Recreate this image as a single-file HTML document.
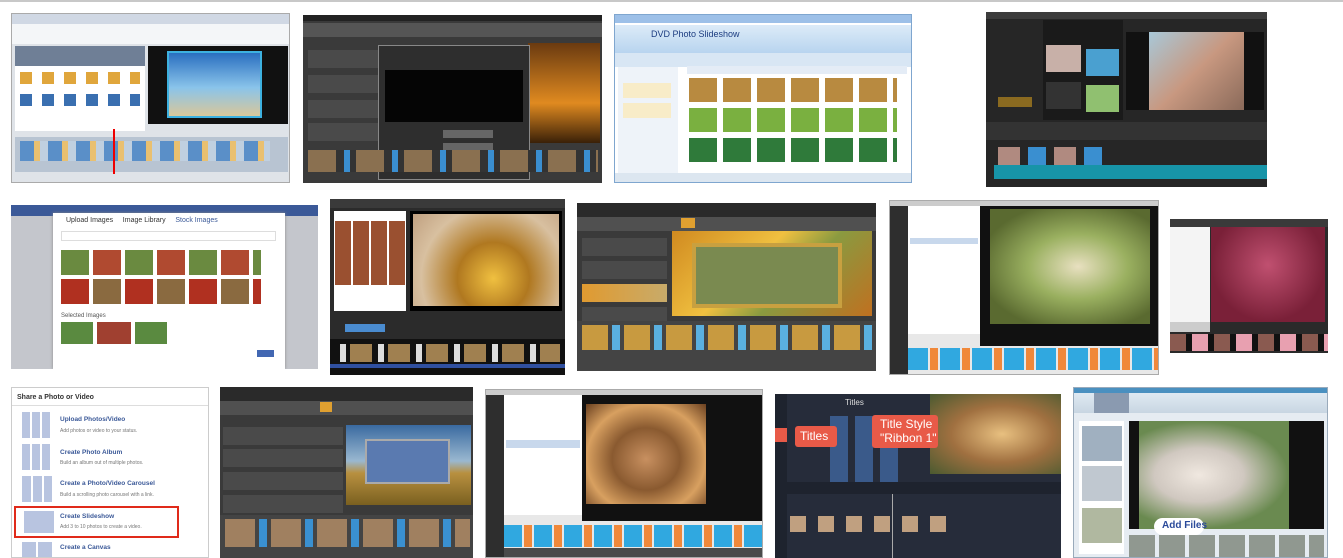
<!DOCTYPE html>
<html><head><meta charset="utf-8"><style>
*{margin:0;padding:0;box-sizing:border-box}
body{width:1343px;height:558px;background:#fff;position:relative;overflow:hidden;font-family:"Liberation Sans",sans-serif}
.t{position:absolute;overflow:hidden}
.b{position:absolute}
.txt{position:absolute;white-space:nowrap}
</style></head><body>
<div class="b" style="left:0;top:0;width:1343px;height:2px;background:#c8c8c8"></div>

<!-- A -->
<div class="t" style="left:11px;top:13px;width:279px;height:170px;background:#dfe3e8;border:1px solid #aaa">
 <div class="b" style="left:0;top:0;width:279px;height:10px;background:#d0d8e4"></div>
 <div class="b" style="left:0;top:10px;width:279px;height:20px;background:#f4f6f8"></div>
 <div class="b" style="left:3px;top:32px;width:130px;height:20px;background:#6f7f96"></div>
 <div class="b" style="left:3px;top:52px;width:130px;height:65px;background:#fff"></div>
 <div class="b" style="left:8px;top:58px;width:120px;height:12px;background:repeating-linear-gradient(90deg,#e0a63c 0 12px,#fff 12px 22px)"></div>
 <div class="b" style="left:8px;top:80px;width:120px;height:12px;background:repeating-linear-gradient(90deg,#3a6fb0 0 12px,#fff 12px 22px)"></div>
 <div class="b" style="left:136px;top:32px;width:140px;height:78px;background:#111"></div>
 <div class="b" style="left:155px;top:37px;width:95px;height:67px;background:linear-gradient(#2a6fc0,#8ac4ea 55%,#d9c79a);border:2px solid #3db1e0"></div>
 <div class="b" style="left:3px;top:123px;width:273px;height:35px;background:#b8c4d2"></div>
 <div class="b" style="left:8px;top:127px;width:250px;height:20px;background:repeating-linear-gradient(90deg,#5a8fc8 0 14px,#e9c070 14px 20px,#c0d0e0 20px 28px)"></div>
 <div class="b" style="left:101px;top:115px;width:2px;height:45px;background:#e00"></div>
</div>

<!-- B -->
<div class="t" style="left:303px;top:15px;width:299px;height:168px;background:#3a3a3a">
 <div class="b" style="left:0;top:0;width:299px;height:6px;background:#222"></div>
 <div class="b" style="left:0;top:8px;width:299px;height:14px;background:#555"></div>
 <div class="b" style="left:5px;top:35px;width:70px;height:18px;background:#4a4a4a"></div>
 <div class="b" style="left:5px;top:60px;width:70px;height:18px;background:#4a4a4a"></div>
 <div class="b" style="left:5px;top:85px;width:70px;height:18px;background:#4a4a4a"></div>
 <div class="b" style="left:5px;top:108px;width:70px;height:18px;background:#4a4a4a"></div>
 <div class="b" style="left:225px;top:28px;width:72px;height:100px;background:linear-gradient(#6a3a10,#e08a20 60%,#3a2008)"></div>
 <div class="b" style="left:75px;top:30px;width:152px;height:135px;background:#2e2e2e;border:1px solid #888"></div>
 <div class="b" style="left:82px;top:55px;width:138px;height:52px;background:#050505"></div>
 <div class="b" style="left:140px;top:115px;width:50px;height:8px;background:#666"></div>
 <div class="b" style="left:140px;top:128px;width:50px;height:8px;background:#666"></div>
 <div class="b" style="left:5px;top:135px;width:290px;height:22px;background:repeating-linear-gradient(90deg,#8a7050 0 28px,#333 28px 36px,#3a8ed0 36px 42px,#333 42px 48px)"></div>
</div>

<!-- C -->
<div class="t" style="left:614px;top:14px;width:298px;height:169px;background:#fff;border:1px solid #7fa6cf">
 <div class="b" style="left:0;top:0;width:298px;height:8px;background:#9dc0e8"></div>
 <div class="b" style="left:0;top:10px;width:298px;height:28px;background:linear-gradient(#dcebf8,#b8d4ef)"></div>
 <div class="txt" style="left:36px;top:14px;font-size:9px;color:#1c3c80">DVD Photo Slideshow</div>
 <div class="b" style="left:0;top:38px;width:298px;height:14px;background:#d8e6f4"></div>
 <div class="b" style="left:3px;top:52px;width:60px;height:110px;background:#eef3f9"></div>
 <div class="b" style="left:8px;top:68px;width:48px;height:15px;background:#f8ecc8"></div>
 <div class="b" style="left:8px;top:88px;width:48px;height:15px;background:#f8ecc8"></div>
 <div class="b" style="left:72px;top:51px;width:220px;height:8px;background:#e4ecf6"></div>
 <div class="b" style="left:74px;top:63px;width:208px;height:24px;background:repeating-linear-gradient(90deg,#b88a40 0 28px,#fff 28px 34px)"></div>
 <div class="b" style="left:74px;top:93px;width:208px;height:24px;background:repeating-linear-gradient(90deg,#7ab040 0 28px,#fff 28px 34px)"></div>
 <div class="b" style="left:74px;top:123px;width:208px;height:24px;background:repeating-linear-gradient(90deg,#2f7a3a 0 28px,#fff 28px 34px)"></div>
 <div class="b" style="left:0;top:158px;width:298px;height:11px;background:#dce6f0"></div>
</div>

<!-- D -->
<div class="t" style="left:986px;top:12px;width:281px;height:175px;background:#262626">
 <div class="b" style="left:0;top:0;width:281px;height:7px;background:#3c3c3c"></div>
 <div class="b" style="left:12px;top:85px;width:34px;height:10px;background:#8a6a20"></div>
 <div class="b" style="left:57px;top:8px;width:80px;height:100px;background:#1a1a1a"></div>
 <div class="b" style="left:60px;top:33px;width:35px;height:27px;background:#c8b0a8"></div>
 <div class="b" style="left:100px;top:37px;width:33px;height:27px;background:#4aa0d0"></div>
 <div class="b" style="left:60px;top:70px;width:35px;height:27px;background:#333"></div>
 <div class="b" style="left:100px;top:73px;width:33px;height:27px;background:#90c070"></div>
 <div class="b" style="left:140px;top:20px;width:138px;height:78px;background:#111"></div>
 <div class="b" style="left:163px;top:20px;width:95px;height:78px;background:linear-gradient(135deg,#a8c8d8,#c89880 50%,#8a6a5a)"></div>
 <div class="b" style="left:0;top:110px;width:281px;height:18px;background:#333"></div>
 <div class="b" style="left:12px;top:135px;width:110px;height:18px;background:repeating-linear-gradient(90deg,#b08a80 0 22px,#262626 22px 30px,#3a8fd0 30px 48px,#262626 48px 56px)"></div>
 <div class="b" style="left:8px;top:153px;width:273px;height:14px;background:#1794a8"></div>
</div>

<!-- E -->
<div class="t" style="left:11px;top:205px;width:307px;height:164px;background:#c4c6cc">
 <div class="b" style="left:0;top:0;width:307px;height:11px;background:#3b5998"></div>
 <div class="b" style="left:42px;top:8px;width:232px;height:156px;background:#fff;box-shadow:0 0 3px #888"></div>
 <div class="txt" style="left:55px;top:12px;font-size:7px;color:#333">Upload Images &nbsp; &nbsp; Image Library &nbsp; &nbsp; <span style="color:#3b5998">Stock Images</span></div>
 <div class="b" style="left:50px;top:26px;width:215px;height:10px;border:1px solid #ddd"></div>
 <div class="b" style="left:50px;top:45px;width:200px;height:25px;background:repeating-linear-gradient(90deg,#6a8a40 0 28px,#fff 28px 32px,#b04a30 32px 60px,#fff 60px 64px)"></div>
 <div class="b" style="left:50px;top:74px;width:200px;height:25px;background:repeating-linear-gradient(90deg,#b03020 0 28px,#fff 28px 32px,#8a6a40 32px 60px,#fff 60px 64px)"></div>
 <div class="txt" style="left:50px;top:108px;font-size:6px;color:#555">Selected Images</div>
 <div class="b" style="left:50px;top:117px;width:110px;height:22px;background:repeating-linear-gradient(90deg,#5a8a40 0 32px,#fff 32px 36px,#a04030 36px 70px,#fff 70px 74px)"></div>
 <div class="b" style="left:246px;top:145px;width:17px;height:7px;background:#4267b2"></div>
</div>

<!-- F -->
<div class="t" style="left:330px;top:199px;width:235px;height:176px;background:#2b2b2b">
 <div class="b" style="left:0;top:0;width:235px;height:9px;background:#3a3a3a"></div>
 <div class="b" style="left:4px;top:12px;width:72px;height:100px;background:#fff"></div>
 <div class="b" style="left:5px;top:22px;width:70px;height:64px;background:repeating-linear-gradient(90deg,#9a5030 0 16px,#fff 16px 18px)"></div>
 <div class="b" style="left:80px;top:12px;width:152px;height:100px;background:#000"></div>
 <div class="b" style="left:83px;top:15px;width:146px;height:92px;background:radial-gradient(circle at 55% 70%,#f0c040,#b07820 35%,#d8c0a0 70%,#c0a080)"></div>
 <div class="b" style="left:15px;top:125px;width:40px;height:8px;background:#4a8cd0"></div>
 <div class="b" style="left:0;top:140px;width:235px;height:36px;background:#111"></div>
 <div class="b" style="left:10px;top:145px;width:220px;height:18px;background:repeating-linear-gradient(90deg,#ddd 0 6px,#111 6px 10px,#a08050 10px 32px,#111 32px 38px)"></div>
 <div class="b" style="left:0;top:165px;width:235px;height:4px;background:#3050a0"></div>
</div>

<!-- G -->
<div class="t" style="left:577px;top:203px;width:299px;height:168px;background:#3a3a3a">
 <div class="b" style="left:0;top:0;width:299px;height:14px;background:#2a2a2a"></div>
 <div class="b" style="left:0;top:14px;width:299px;height:14px;background:#505050"></div>
 <div class="b" style="left:104px;top:15px;width:14px;height:10px;background:#e0a030"></div>
 <div class="b" style="left:5px;top:35px;width:85px;height:18px;background:#4a4a4a"></div>
 <div class="b" style="left:5px;top:58px;width:85px;height:18px;background:#4a4a4a"></div>
 <div class="b" style="left:5px;top:81px;width:85px;height:18px;background:linear-gradient(90deg,#e09a30,#c8ab6a)"></div>
 <div class="b" style="left:5px;top:104px;width:85px;height:18px;background:#4a4a4a"></div>
 <div class="b" style="left:95px;top:28px;width:200px;height:85px;background:linear-gradient(135deg,#d08a20,#f0c040 40%,#8a9a40 60%,#c07020)"></div>
 <div class="b" style="left:115px;top:40px;width:150px;height:65px;background:#7a8a50;border:4px solid #c8a040"></div>
 <div class="b" style="left:0;top:118px;width:299px;height:50px;background:#444"></div>
 <div class="b" style="left:5px;top:122px;width:290px;height:25px;background:repeating-linear-gradient(90deg,#c89a40 0 26px,#444 26px 30px,#5ab0e0 30px 38px,#444 38px 42px)"></div>
</div>

<!-- H -->
<div class="t" style="left:889px;top:200px;width:270px;height:175px;background:#e8e8e8;border:1px solid #aaa">
 <div class="b" style="left:0;top:0;width:270px;height:5px;background:#ccc"></div>
 <div class="b" style="left:0;top:5px;width:18px;height:170px;background:#2e2e2e"></div>
 <div class="b" style="left:18px;top:5px;width:72px;height:128px;background:#fff"></div>
 <div class="b" style="left:20px;top:37px;width:68px;height:6px;background:#c8d8ec"></div>
 <div class="b" style="left:90px;top:5px;width:180px;height:140px;background:#111"></div>
 <div class="b" style="left:100px;top:8px;width:160px;height:115px;background:radial-gradient(ellipse at 55% 50%,#e8e0c0,#9ab060 40%,#5a6a30 80%)"></div>
 <div class="b" style="left:18px;top:147px;width:252px;height:22px;background:repeating-linear-gradient(90deg,#30a8e0 0 20px,#e8e8e8 20px 22px,#f0883a 22px 30px,#e8e8e8 30px 32px)"></div>
</div>

<!-- I -->
<div class="t" style="left:1170px;top:219px;width:158px;height:134px;background:#2a2a2a">
 <div class="b" style="left:0;top:0;width:158px;height:8px;background:#3a3a3a"></div>
 <div class="b" style="left:0;top:8px;width:40px;height:95px;background:#f4f4f4"></div>
 <div class="b" style="left:41px;top:8px;width:114px;height:95px;background:radial-gradient(circle at 50% 40%,#c05070,#7a2038 70%)"></div>
 <div class="b" style="left:0;top:103px;width:40px;height:10px;background:#ccc"></div>
 <div class="b" style="left:0;top:115px;width:158px;height:17px;background:repeating-linear-gradient(90deg,#8a5a50 0 16px,#111 16px 22px,#e8a0b0 22px 38px,#111 38px 44px)"></div>
</div>

<!-- J -->
<div class="t" style="left:11px;top:387px;width:198px;height:171px;background:#fff;border:1px solid #ccc">
 <div class="txt" style="left:5px;top:6px;font-size:7px;color:#333;font-weight:bold">Share a Photo or Video</div>
 <div class="b" style="left:0;top:17px;width:198px;height:1px;background:#ddd"></div>
 <div class="b" style="left:10px;top:24px;width:30px;height:26px;background:repeating-linear-gradient(90deg,#b8c4e0 0 8px,#fff 8px 10px)"></div>
 <div class="txt" style="left:48px;top:28px;font-size:6.5px;color:#3b5998;font-weight:bold">Upload Photos/Video</div>
 <div class="txt" style="left:48px;top:40px;font-size:5px;color:#777">Add photos or video to your status.</div>
 <div class="b" style="left:10px;top:56px;width:30px;height:26px;background:repeating-linear-gradient(90deg,#b8c4e0 0 8px,#fff 8px 10px)"></div>
 <div class="txt" style="left:48px;top:61px;font-size:6.5px;color:#3b5998;font-weight:bold">Create Photo Album</div>
 <div class="txt" style="left:48px;top:72px;font-size:5px;color:#777">Build an album out of multiple photos.</div>
 <div class="b" style="left:10px;top:88px;width:30px;height:26px;background:repeating-linear-gradient(90deg,#b8c4e0 0 9px,#fff 9px 11px)"></div>
 <div class="txt" style="left:48px;top:92px;font-size:6.5px;color:#3b5998;font-weight:bold">Create a Photo/Video Carousel</div>
 <div class="txt" style="left:48px;top:104px;font-size:5px;color:#777">Build a scrolling photo carousel with a link.</div>
 <div class="b" style="left:2px;top:118px;width:165px;height:32px;border:2px solid #e02a1a"></div>
 <div class="b" style="left:12px;top:123px;width:30px;height:22px;background:#b8c4e0"></div>
 <div class="txt" style="left:48px;top:125px;font-size:6.5px;color:#3b5998;font-weight:bold">Create Slideshow</div>
 <div class="txt" style="left:48px;top:136px;font-size:5px;color:#777">Add 3 to 10 photos to create a video.</div>
 <div class="b" style="left:10px;top:154px;width:30px;height:20px;background:repeating-linear-gradient(90deg,#b8c4e0 0 14px,#fff 14px 16px)"></div>
 <div class="txt" style="left:48px;top:156px;font-size:6.5px;color:#3b5998;font-weight:bold">Create a Canvas</div>
</div>

<!-- K -->
<div class="t" style="left:220px;top:387px;width:253px;height:171px;background:#3a3a3a">
 <div class="b" style="left:0;top:0;width:253px;height:14px;background:#2a2a2a"></div>
 <div class="b" style="left:0;top:14px;width:253px;height:14px;background:#505050"></div>
 <div class="b" style="left:100px;top:15px;width:12px;height:10px;background:#e0a030"></div>
 <div class="b" style="left:3px;top:40px;width:120px;height:18px;background:#4a4a4a"></div>
 <div class="b" style="left:3px;top:62px;width:120px;height:18px;background:#4a4a4a"></div>
 <div class="b" style="left:3px;top:85px;width:120px;height:18px;background:#4a4a4a"></div>
 <div class="b" style="left:3px;top:108px;width:120px;height:18px;background:#4a4a4a"></div>
 <div class="b" style="left:126px;top:38px;width:125px;height:80px;background:linear-gradient(#3a6aa0,#9ab8d0 45%,#b89040 60%,#7a6020)"></div>
 <div class="b" style="left:145px;top:52px;width:85px;height:45px;background:#5a7ab0;border:2px solid #aaa"></div>
 <div class="b" style="left:0;top:128px;width:253px;height:43px;background:#444"></div>
 <div class="b" style="left:5px;top:132px;width:245px;height:28px;background:repeating-linear-gradient(90deg,#a08060 0 30px,#444 30px 34px,#3a90d0 34px 42px,#444 42px 46px)"></div>
</div>

<!-- L -->
<div class="t" style="left:485px;top:389px;width:278px;height:169px;background:#e8e8e8;border:1px solid #aaa">
 <div class="b" style="left:0;top:0;width:278px;height:5px;background:#ccc"></div>
 <div class="b" style="left:0;top:5px;width:18px;height:164px;background:#2e2e2e"></div>
 <div class="b" style="left:18px;top:5px;width:78px;height:120px;background:#fff"></div>
 <div class="b" style="left:20px;top:50px;width:74px;height:8px;background:#c8d8ec"></div>
 <div class="b" style="left:96px;top:5px;width:182px;height:126px;background:#111"></div>
 <div class="b" style="left:100px;top:14px;width:120px;height:100px;background:radial-gradient(ellipse at 50% 55%,#c89060,#8a5a30 40%,#d8a060 70%,#6a4020)"></div>
 <div class="b" style="left:18px;top:135px;width:260px;height:22px;background:repeating-linear-gradient(90deg,#30a8e0 0 18px,#e8e8e8 18px 20px,#f0883a 20px 28px,#e8e8e8 28px 30px)"></div>
 <div class="b" style="left:18px;top:158px;width:260px;height:11px;background:#4a4a4a"></div>
</div>

<!-- M -->
<div class="t" style="left:775px;top:394px;width:286px;height:164px;background:#262c3a">
 <div class="b" style="left:0;top:0;width:12px;height:164px;background:#1e232e"></div>
 <div class="b" style="left:0;top:34px;width:12px;height:14px;background:#e85a48"></div>
 <div class="txt" style="left:70px;top:4px;font-size:8px;color:#ddd">Titles</div>
 <div class="b" style="left:55px;top:22px;width:70px;height:78px;background:repeating-linear-gradient(90deg,#3a5a8a 0 18px,#262c3a 18px 25px)"></div>
 <div class="b" style="left:155px;top:0;width:131px;height:80px;background:radial-gradient(ellipse at 55% 50%,#e8c080,#a07040 50%,#4a5a30)"></div>
 <div class="b" style="left:97px;top:21px;width:66px;height:33px;background:#e85a48;border-radius:3px"></div>
 <div class="txt" style="left:105px;top:23px;font-size:12px;color:#fff;line-height:14px">Title Style<br>"Ribbon 1"</div>
 <div class="b" style="left:20px;top:32px;width:42px;height:21px;background:#e85a48;border-radius:3px"></div>
 <div class="txt" style="left:25px;top:35px;font-size:12px;color:#fff">Titles</div>
 <div class="b" style="left:0;top:88px;width:286px;height:12px;background:#1e232e"></div>
 <div class="b" style="left:15px;top:122px;width:160px;height:16px;background:repeating-linear-gradient(90deg,#c0a080 0 16px,#262c3a 16px 28px)"></div>
 <div class="b" style="left:117px;top:100px;width:1px;height:64px;background:#aaa"></div>
</div>

<!-- N -->
<div class="t" style="left:1073px;top:387px;width:255px;height:171px;background:#e6ecf2;border:1px solid #9ab">
 <div class="b" style="left:0;top:0;width:255px;height:5px;background:#4a90c0"></div>
 <div class="b" style="left:0;top:5px;width:255px;height:20px;background:linear-gradient(#dfe9f2,#c8d6e2)"></div>
 <div class="b" style="left:20px;top:5px;width:35px;height:20px;background:#8a9ab0"></div>
 <div class="b" style="left:5px;top:33px;width:45px;height:133px;background:#fff"></div>
 <div class="b" style="left:8px;top:38px;width:40px;height:35px;background:#a0b0c0"></div>
 <div class="b" style="left:8px;top:78px;width:40px;height:35px;background:#c0c8d0"></div>
 <div class="b" style="left:8px;top:120px;width:40px;height:35px;background:#b0b8a0"></div>
 <div class="b" style="left:55px;top:33px;width:195px;height:108px;background:#111"></div>
 <div class="b" style="left:65px;top:33px;width:150px;height:108px;background:radial-gradient(ellipse at 40% 50%,#f0e8e0,#d0c8c0 35%,#6a8a50 70%)"></div>
 <div class="b" style="left:80px;top:130px;width:50px;height:17px;background:#fff;border-radius:9px"></div>
 <div class="txt" style="left:88px;top:132px;font-size:10px;color:#2a4a9a;font-weight:bold">Add Files</div>
 <div class="b" style="left:55px;top:147px;width:195px;height:22px;background:repeating-linear-gradient(90deg,#909890 0 26px,#e6ecf2 26px 30px)"></div>
</div>
</body></html>
